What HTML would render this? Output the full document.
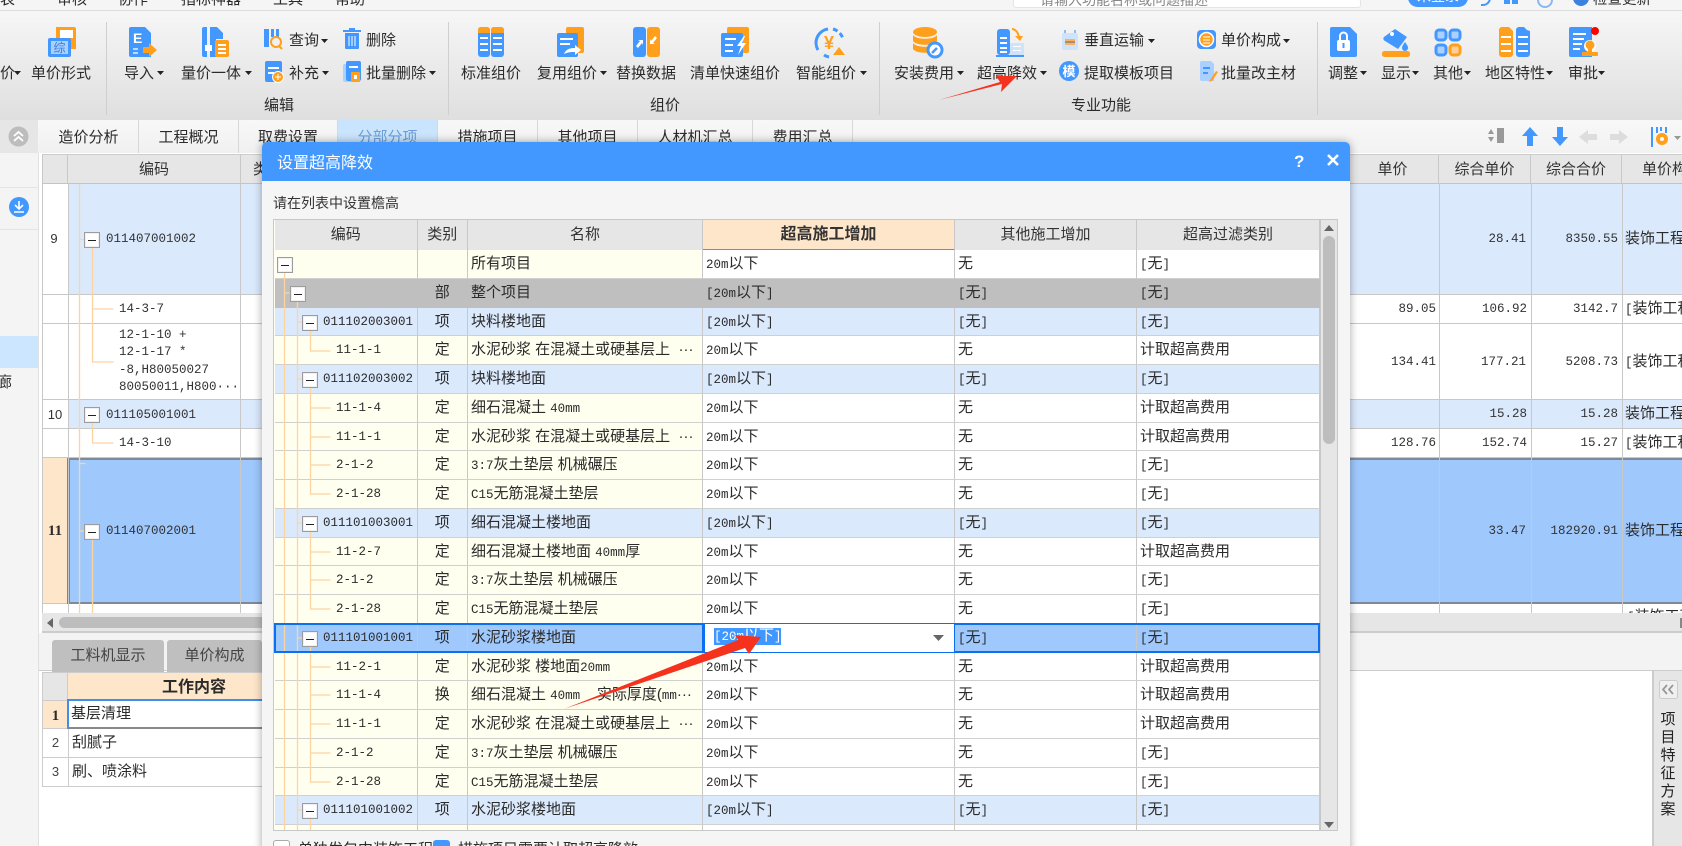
<!DOCTYPE html>
<html lang="zh"><head><meta charset="utf-8"><title>设置超高降效</title>
<style>
html,body{margin:0;padding:0;width:1682px;height:846px;overflow:hidden;background:#fff}
#root{position:absolute;left:0;top:0;width:1682px;height:846px;overflow:hidden;font-family:"Liberation Sans","Noto Sans CJK SC",sans-serif;color:#2b2b2b;font-size:15px;filter:blur(.35px)}
.a{position:absolute}
.t{position:absolute;line-height:20px;white-space:nowrap}
.ct{transform:translateX(-50%)}
.n{font-family:"Liberation Mono","Noto Sans CJK SC",monospace;font-size:12.5px;color:#333}
.nr{position:absolute;line-height:20px;white-space:nowrap;text-align:right;font-family:"Liberation Mono",monospace;font-size:12.5px;color:#333}
i{font-style:normal;font-family:"Liberation Mono",monospace;font-size:12.5px}
.tab{position:absolute;top:120px;height:33px;line-height:36px;text-align:center;border-right:1px solid #d8d8d8;background:linear-gradient(#f8f8f8,#f0f0f0);box-sizing:border-box}
.hd{position:absolute;top:154px;height:30px;line-height:30px;text-align:center;background:#e6e6e6;border-right:1px solid #c8c8c8;border-top:1px solid #ccc;border-bottom:1px solid #c4c4c4;box-sizing:border-box;color:#333;white-space:nowrap;overflow:hidden}
.rw{position:absolute;box-sizing:border-box;border-bottom:1px solid #c8c8c8}
.vl{position:absolute;width:1px;background:#c8c8c8}
.box{position:absolute;width:16px;height:16px;box-sizing:border-box;border:1px solid #9c9c9c;background:#fff;box-shadow:inset 0 0 0 1px #f0f0f0}
.box:after{content:"";position:absolute;left:3px;right:3px;top:6.500px;height:1px;background:#222}
#dlg{position:absolute;left:262px;top:142px;width:1088px;height:720px;background:#f5f5f5;border-radius:5px 5px 0 0;box-shadow:0 0 9px rgba(0,0,0,.35)}
#title{position:absolute;left:0;top:0;width:1088px;height:39px;background:#4398ff;border-radius:5px 5px 0 0;color:#fff;font-size:16px;line-height:44px;text-indent:15px}
#grid{position:absolute;left:273px;top:219px;width:1065px;height:612px;background:#fffff2;border:1px solid #c8c8c8;box-sizing:border-box;overflow:hidden}
.r{position:absolute;left:1px;width:1045px;height:28.75px;display:grid;grid-template-columns:142.5px 50.5px 235px 252px 182px 183px;line-height:28px;white-space:nowrap;box-sizing:border-box}
.r>div{border-right:1px solid #c8c8c8;border-bottom:1px solid #d0d0d0;padding-left:3px;overflow:hidden;background:#fff;color:#2b2b2b;box-sizing:border-box}
.r>div:nth-child(1),.r>div:nth-child(2),.r>div:nth-child(3){background:#fffff0}
.r>div:nth-child(2){text-align:center;padding:0}
.r>div:nth-child(1).i{padding-left:48px}
.r>div:nth-child(1).c{padding-left:61px}
.b>div,.b>div:nth-child(1),.b>div:nth-child(2),.b>div:nth-child(3){background:#dbe9fd}
.g>div,.g>div:nth-child(1),.g>div:nth-child(2),.g>div:nth-child(3){background:#bfbfbf;border-color:#bfbfbf}
.s>div,.s>div:nth-child(1),.s>div:nth-child(2),.s>div:nth-child(3){background:#9fc8fd}
.h{height:31px;line-height:30px;top:0}
.h>div,.h>div:nth-child(1),.h>div:nth-child(2),.h>div:nth-child(3){background:#e6e6e6;text-align:center;padding:0;color:#333;border-bottom:1px solid #c8c8c8}
.h>div.p{background:#fee6cb;border-bottom:2px solid #4398ff;font-weight:bold;font-size:16px}
</style></head><body><div id="root">

<!-- top menu -->
<div class="a" style="left:0;top:0;width:1682px;height:11px;background:#f5f5f5;border-bottom:1px solid #dcdcdc;box-sizing:border-box"></div>
<div class="t" style="left:0;top:-10px">表</div><div class="t" style="left:57px;top:-10px">审核</div><div class="t" style="left:118px;top:-10px">协作</div><div class="t" style="left:181px;top:-10px">指标神器</div><div class="t" style="left:273px;top:-10px">工具</div><div class="t" style="left:335px;top:-10px">帮助</div>
<div class="a" style="left:1013px;top:-8px;width:346px;height:14px;background:#fff;border-radius:3px;border:1px solid #e4e4e4"></div>
<div class="t" style="left:1040px;top:-10px;color:#888;font-size:14px">请输入功能名称或问题描述</div>
<div class="a" style="left:1408px;top:-12px;width:60px;height:19px;background:#4398ff;border-radius:10px;color:#fff;text-align:center;line-height:17px;font-size:14px">未登录</div>
<div class="a" style="left:1481px;top:-6px;width:8px;height:10px;border:2px solid #4398ff;border-top:0;border-left:0;border-radius:0 0 8px 0"></div>
<div class="a" style="left:1504px;top:-4px;width:6px;height:8px;background:#4398ff"></div><div class="a" style="left:1512px;top:-4px;width:6px;height:8px;background:#4398ff"></div>
<div class="a" style="left:1537px;top:-8px;width:12px;height:12px;border:2px solid #8ab8ee;border-radius:50%"></div>
<div class="a" style="left:1573px;top:-10px;width:16px;height:16px;background:#3b82e0;border-radius:50%"></div>
<div class="t" style="left:1593px;top:-10px;font-size:14.5px">检查更新</div>

<!-- ribbon -->
<div class="a" style="left:0;top:11px;width:1682px;height:109px;background:linear-gradient(#f6f6f6,#dfdfdf)"></div>
<div class="a" style="left:106px;top:22px;width:1px;height:93px;background:#cfcfcf"></div>
<div class="a" style="left:448px;top:22px;width:1px;height:93px;background:#cfcfcf"></div>
<div class="a" style="left:879px;top:22px;width:1px;height:93px;background:#cfcfcf"></div>
<div class="a" style="left:1317px;top:22px;width:1px;height:93px;background:#cfcfcf"></div>

<svg class="a" style="left:0;top:0" width="1682" height="120" viewBox="0 0 1682 120">
<g fill="#222">
<path d="M14 71h7l-3.500 4zM157 71h7l-3.500 4zM245 71h7l-3.500 4zM321 39h7l-3.500 4zM322 71h7l-3.500 4zM429 71h7l-3.500 4zM600 71h7l-3.500 4zM860 71h7l-3.500 4zM957 71h7l-3.500 4zM1040 71h7l-3.500 4zM1148 39h7l-3.500 4zM1283 39h7l-3.500 4zM1360 71h7l-3.500 4zM1412 71h7l-3.500 4zM1464 71h7l-3.500 4zM1546 71h7l-3.500 4zM1598 71h7l-3.500 4z"/>
</g>
<!-- 单价形式 -->
<path d="M56 27h18a2 2 0 0 1 2 2v20h-6V40H56z" fill="#ff9f1c"/><path d="M60 30h13v8H60z" fill="#fff"/>
<rect x="48" y="38" width="23" height="19" rx="2" fill="#4398ff"/><rect x="51" y="41" width="17" height="13" fill="#a9d0ff"/>
<text x="59.500" y="52" font-size="12" fill="#2f7fe0" text-anchor="middle" font-family="Noto Sans CJK SC">综</text>
<!-- 导入 -->
<path d="M129 29a2 2 0 0 1 2-2h14l6 6v24h-20a2 2 0 0 1-2-2z" fill="#4398ff"/><text x="133" y="43" font-size="14" font-weight="bold" fill="#fff" font-family="Liberation Sans">E</text>
<path d="M133 48h5v2h-5zM133 52h5v2h-5z" fill="#bcd9ff"/><path d="M143 47h6v-4l8 7-8 7v-4h-6z" fill="#ff9f1c"/>
<!-- 量价一体 -->
<path d="M202 29a2 2 0 0 1 2-2h3v30h-3a2 2 0 0 1-2-2zM210 27h7l6 6v6h-7v18h-6z" fill="#4398ff"/><rect x="205" y="45" width="7" height="6" fill="#fff"/>
<rect x="215" y="40" width="14" height="17" rx="2" fill="#ff9f1c"/><path d="M218 44h8v2h-8zM218 48h8v2h-8zM218 52h8v2h-8z" fill="#fff"/>
<!-- 查询 -->
<path d="M264 29h5v18h-5z" fill="#4398ff"/><path d="M271 29h3v8h-3zM276 29h3v8h-3z" fill="#4398ff"/><circle cx="276" cy="42" r="5" fill="none" stroke="#ff9f1c" stroke-width="2"/><path d="M279 46l3 3" stroke="#ff9f1c" stroke-width="2"/>
<!-- 补充 -->
<rect x="265" y="61" width="17" height="21" rx="2" fill="#4398ff"/><path d="M268 67h11v2h-11zM268 72h6v2h-6z" fill="#fff"/><circle cx="278" cy="77" r="5.500" fill="#ff9f1c" stroke="#fff"/><path d="M275 77h6M278 74v6" stroke="#fff"/>
<!-- 删除 -->
<path d="M343 30h18v2h-18zM349 28h6v2h-6zM345 33h14v15a1 1 0 0 1-1 1h-12a1 1 0 0 1-1-1z" fill="#4398ff"/><path d="M349 36v10M352 36v10M355 36v10" stroke="#fff"/>
<!-- 批量删除 -->
<rect x="343" y="64" width="15" height="18" rx="2" fill="#a9d0ff"/><rect x="346" y="61" width="15" height="20" rx="2" fill="#4398ff"/><path d="M349 66h9v2h-9z" fill="#fff"/><rect x="351" y="72" width="9" height="10" rx="1" fill="#ff9f1c"/><rect x="354" y="75" width="3" height="4" fill="#fff"/>
<!-- 标准组价 -->
<g id="col"><rect x="478" y="27" width="12" height="30" rx="3" fill="#4398ff"/><rect x="491" y="27" width="13" height="30" rx="3" fill="#4398ff"/><path d="M478 30a3 3 0 0 1 3-3h6a3 3 0 0 1 3 3v3h-12zM491 30a3 3 0 0 1 3-3h7a3 3 0 0 1 3 3v3h-13z" fill="#ff9f1c"/><path d="M480 37h8v2h-8zM480 43h8v2h-8zM480 49h8v2h-8zM493 37h9v2h-9zM493 43h9v2h-9zM493 49h9v2h-9z" fill="#fff"/></g>
<!-- 复用组价 -->
<rect x="566" y="27" width="18" height="26" rx="2" fill="#ff9f1c"/><rect x="557" y="33" width="21" height="24" rx="2" fill="#4398ff"/><path d="M560 38h13v2h-13zM560 43h10v2h-10z" fill="#fff"/><path d="M564 54c2-5 6-6 11-6v-3l6 5-6 5v-3c-4 0-7 0-11 2z" fill="#fff"/>
<!-- 替换数据 -->
<rect x="633" y="27" width="13" height="30" rx="3" fill="#4398ff"/><rect x="647" y="27" width="13" height="30" rx="3" fill="#ff9f1c"/><path d="M636 46l4-5-2-1h5v5l-1-2-4 5zM657 38l-4 5 2 1h-5v-5l1 2 4-5z" fill="#fff"/>
<!-- 清单快速组价 -->
<rect x="727" y="27" width="22" height="26" rx="2" fill="#ff9f1c"/><rect x="721" y="33" width="22" height="24" rx="2" fill="#4398ff"/><path d="M725 38h11v2h-11zM725 44h8v2h-8zM725 50h8v2h-8z" fill="#fff"/><path d="M744 36l-7 10h4l-3 9 8-12h-4l3-7z" fill="#fff"/>
<!-- 智能组价 -->
<path d="M818 50a14 14 0 0 1 10-21" fill="none" stroke="#4398ff" stroke-width="3"/><path d="M833 29a14 14 0 0 1 10 10" fill="none" stroke="#4398ff" stroke-width="3" stroke-dasharray="5 3"/><path d="M824 55a14 14 0 0 0 5 2" fill="none" stroke="#4398ff" stroke-width="3"/>
<text x="829" y="49" font-size="18" font-weight="bold" fill="#ff9f1c" text-anchor="middle" font-family="Liberation Sans">¥</text><path d="M838 44l6 8h-12z" fill="#ff9f1c" transform="translate(1 3)"/>
<!-- 安装费用 -->
<ellipse cx="925" cy="32" rx="12" ry="5" fill="#ff9f1c"/><path d="M913 35c3 5 21 5 24 0v6c-3 5-21 5-24 0zM913 43c3 5 21 5 24 0v6c-3 5-21 5-24 0z" fill="#ff9f1c"/><circle cx="935" cy="50" r="7" fill="#fff" stroke="#4398ff" stroke-width="3"/><path d="M932 53l5-5" stroke="#4398ff" stroke-width="2.500"/>
<!-- 超高降效 -->
<rect x="997" y="29" width="13" height="26" rx="3" fill="#4398ff"/><rect x="1010" y="43" width="14" height="12" fill="#cfe3fb"/><rect x="996" y="55" width="28" height="2" fill="#4398ff"/><path d="M1000 37h7v2h-7zM1000 42h7v2h-7zM1000 47h7v2h-7zM1000 51h7v2h-7zM1013 46h8v1h-8zM1013 50h8v1h-8z" fill="#fff"/><path d="M1012 29c3 0 6 3 7 8" fill="none" stroke="#ff9f1c" stroke-width="2"/><path d="M1015 36l8 0-3 5z" fill="#ff9f1c"/>
<!-- 垂直运输 -->
<rect x="1062" y="33" width="16" height="17" rx="2" fill="#cfe3fb"/><rect x="1065" y="39" width="10" height="6" fill="#f6b46a"/><path d="M1065 30v3M1075 30v3" stroke="#8fbdf3" stroke-width="2"/><path d="M1065 42h10" stroke="#666" stroke-width="1"/>
<!-- 模 -->
<circle cx="1069" cy="71" r="10" fill="#4398ff"/><text x="1069" y="76" font-size="13" fill="#fff" font-weight="bold" text-anchor="middle" font-family="Noto Sans CJK SC">模</text>
<!-- 单价构成 -->
<rect x="1197" y="30" width="19" height="19" rx="4" fill="#4398ff"/><circle cx="1206.500" cy="39.500" r="7" fill="#ff9f1c" stroke="#fff" stroke-width="1.500"/><path d="M1203 37h7M1203 40h7M1203 43h7" stroke="#fff"/>
<!-- 批量改主材 -->
<path d="M1200 63a2 2 0 0 1 2-2h9l3 3v17h-12a2 2 0 0 1-2-2z" fill="#a9d0ff"/><path d="M1203 67h7v2h-7zM1203 72h5v2h-5z" fill="#4398ff"/><path d="M1210 80l6-9 2 1-6 9-3 1z" fill="#ff9f1c"/>
<!-- 调整 -->
<path d="M1330 29a2 2 0 0 1 2-2h18l7 7v21a2 2 0 0 1-2 2h-23a2 2 0 0 1-2-2z" fill="#4398ff"/><rect x="1337" y="40" width="13" height="11" rx="2" fill="#fff"/><path d="M1340 40v-4a3.500 3.500 0 0 1 7 0v4" fill="none" stroke="#fff" stroke-width="2"/><rect x="1342.500" y="43" width="2" height="5" fill="#4398ff"/>
<!-- 显示 -->
<path d="M1395 29l12 8-9 12-13-8c-2-1-2-3-1-4z" fill="#4398ff"/><circle cx="1392" cy="34" r="2" fill="#fff"/><path d="M1405 42c2 3 3 4 3 6a3 3 0 0 1-6 0c0-2 1-3 3-6z" fill="#4398ff"/><rect x="1382" y="51" width="28" height="6" rx="2.500" fill="#ff9f1c"/>
<!-- 其他 -->
<g fill="#a9d0ff" stroke="#4398ff" stroke-width="3"><rect x="1436" y="30" width="10" height="10" rx="3"/><rect x="1450" y="30" width="10" height="10" rx="3"/><rect x="1436" y="45" width="10" height="10" rx="3"/></g><rect x="1450" y="45" width="10" height="10" rx="3" fill="#ffcf94" stroke="#ff9f1c" stroke-width="3"/>
<!-- 地区特性 -->
<path d="M1499 30a3 3 0 0 1 3-3h7l4 4v23a3 3 0 0 1-3 3h-8a3 3 0 0 1-3-3z" fill="#ff9f1c"/><path d="M1516 30a3 3 0 0 1 3-3h5l3 3 3 1v23a3 3 0 0 1-3 3h-8a3 3 0 0 1-3-3z" fill="#4398ff"/><path d="M1501 36h10v2h-10zM1501 43h10v2h-10zM1501 50h10v2h-10zM1518 36h10v2h-10zM1518 43h10v2h-10zM1518 50h10v2h-10z" fill="#fff"/>
<!-- 审批 -->
<path d="M1569 29a2 2 0 0 1 2-2h21v30h-21a2 2 0 0 1-2-2z" fill="#4398ff"/><path d="M1573 33h13v2h-13zM1573 38h11v2h-11zM1573 43h9v2h-9zM1573 48h7v2h-7z" fill="#fff"/><circle cx="1590" cy="46" r="6" fill="#fff"/><circle cx="1590" cy="45" r="4.500" fill="#ff9f1c"/><path d="M1588 49h4v4h-4z" fill="#ff9f1c"/><rect x="1582" y="52" width="16" height="4" rx="1" fill="#ff9f1c"/><circle cx="1595" cy="31" r="4" fill="#f00"/>
</svg>

<div class="t" style="left:0;top:64px">价</div>
<div class="t" style="left:31px;top:64px">单价形式</div>
<div class="t" style="left:124px;top:64px">导入</div>
<div class="t" style="left:181px;top:64px">量价一体</div>
<div class="t" style="left:289px;top:31px">查询</div>
<div class="t" style="left:289px;top:64px">补充</div>
<div class="t" style="left:366px;top:31px">删除</div>
<div class="t" style="left:366px;top:64px">批量删除</div>
<div class="t" style="left:264px;top:96px">编辑</div>
<div class="t" style="left:461px;top:64px">标准组价</div>
<div class="t" style="left:537px;top:64px">复用组价</div>
<div class="t" style="left:616px;top:64px">替换数据</div>
<div class="t" style="left:690px;top:64px">清单快速组价</div>
<div class="t" style="left:796px;top:64px">智能组价</div>
<div class="t" style="left:650px;top:96px">组价</div>
<div class="t" style="left:894px;top:64px">安装费用</div>
<div class="t" style="left:977px;top:64px">超高降效</div>
<div class="t" style="left:1084px;top:31px">垂直运输</div>
<div class="t" style="left:1084px;top:64px">提取模板项目</div>
<div class="t" style="left:1071px;top:96px">专业功能</div>
<div class="t" style="left:1221px;top:31px">单价构成</div>
<div class="t" style="left:1221px;top:64px">批量改主材</div>
<div class="t" style="left:1328px;top:64px">调整</div>
<div class="t" style="left:1381px;top:64px">显示</div>
<div class="t" style="left:1433px;top:64px">其他</div>
<div class="t" style="left:1485px;top:64px">地区特性</div>
<div class="t" style="left:1568px;top:64px">审批</div>

<!-- tabs row -->
<div class="a" style="left:0;top:120px;width:1682px;height:33px;background:linear-gradient(#f8f8f8,#f2f2f2)"></div>
<div class="a" style="left:0;top:120px;width:38px;height:33px;background:#e6e6e6"></div>
<svg class="a" style="left:8px;top:126px" width="21" height="21"><circle cx="10.500" cy="10.500" r="10" fill="#bdbdbd"/><path d="M6 10l4.500-4 4.500 4M6 15l4.500-4 4.500 4" fill="none" stroke="#fff" stroke-width="1.800"/></svg>
<div class="tab" style="left:39px;width:100px">造价分析</div>
<div class="tab" style="left:139px;width:100px">工程概况</div>
<div class="tab" style="left:239px;width:99px">取费设置</div>
<div class="tab" style="left:338px;width:100px;background:linear-gradient(#c8e4ff,#cfe6fb);color:#6a9ed8">分部分项</div>
<div class="tab" style="left:438px;width:100px">措施项目</div>
<div class="tab" style="left:538px;width:100px">其他项目</div>
<div class="tab" style="left:638px;width:115px">人材机汇总</div>
<div class="tab" style="left:753px;width:100px">费用汇总</div>
<svg class="a" style="left:1480px;top:124px" width="202" height="28">
<path d="M14 10H8l3-5zM14 13H8l3 5z" fill="#999"/><rect x="17" y="4" width="7" height="15" fill="#999"/>
<path d="M50 3l8 9h-5v10h-6V12h-5z" fill="#4398ff"/><path d="M80 22l8-9h-5V3h-6v10h-5z" fill="#4398ff"/>
<path d="M99 13l9-7v4h9v6h-9v4z" fill="#ddd"/><path d="M148 13l-9-7v4h-9v6h9v4z" fill="#ddd"/>
<path d="M172 3v20" stroke="#4398ff" stroke-width="2"/><path d="M177 3v6M181 3v4M186 3v6" stroke="#4398ff" stroke-width="2"/><circle cx="182" cy="15" r="6" fill="#ff9f1c"/><circle cx="182" cy="15" r="2" fill="#fff"/><path d="M194 12h7l-3.500 4z" fill="#999"/>
</svg>

<!-- left panel -->
<div class="a" style="left:0;top:153px;width:38px;height:693px;background:#f4f4f4;border-right:1px solid #e0e0e0"></div>
<div class="a" style="left:0;top:187px;width:38px;height:1px;background:#e4e4e4"></div>
<div class="a" style="left:0;top:229px;width:38px;height:1px;background:#e4e4e4"></div>
<svg class="a" style="left:9px;top:197px" width="21" height="21"><circle cx="10" cy="10" r="10" fill="#4398ff"/><path d="M6 8l4 4 4-4M10 4v8M5 15h10" fill="none" stroke="#fff" stroke-width="1.600"/></svg>
<div class="a" style="left:0;top:336px;width:38px;height:32px;background:#cce6ff"></div>
<div class="t" style="left:-3px;top:373px">廊</div>

<!-- main grid -->
<div class="a" style="left:42px;top:154px;width:1640px;height:459px;background:#fff;overflow:hidden"></div>
<div class="hd" style="left:42px;width:26px"></div>
<div class="hd" style="left:68px;width:173px">编码</div>
<div class="hd" style="left:241px;width:1106px;text-align:left;text-indent:12px">类别</div>
<div class="hd" style="left:1347px;width:92px">单价</div>
<div class="hd" style="left:1439px;width:92px">综合单价</div>
<div class="hd" style="left:1531px;width:91px">综合合价</div>
<div class="hd" style="left:1622px;width:60px;text-align:left;text-indent:20px;border-right:0">单价构成</div>

<div class="rw" style="left:68px;top:184px;width:1614px;height:111px;background:#dbe9fd"></div>
<div class="rw" style="left:42px;top:184px;width:26px;height:111px;background:#fff"></div>
<div class="rw" style="left:42px;top:295px;width:1640px;height:29px"></div>
<div class="rw" style="left:42px;top:324px;width:1640px;height:76px"></div>
<div class="rw" style="left:68px;top:400px;width:1614px;height:29px;background:#dbe9fd"></div>
<div class="rw" style="left:42px;top:400px;width:26px;height:29px;background:#fff"></div>
<div class="rw" style="left:42px;top:429px;width:1640px;height:29px"></div>
<div class="a" style="left:42px;top:458px;width:26px;height:146px;background:#fee6cb;box-sizing:border-box;border-bottom:1px solid #c8c8c8"></div>
<div class="a" style="left:67px;top:458px;width:1615px;height:146px;background:#9fc8fd;box-sizing:border-box;border:2px solid #808a96;border-left:3px solid #3f8ef0;border-right:0"></div>

<div class="vl" style="left:42px;top:154px;height:459px"></div>
<div class="vl" style="left:68px;top:184px;height:429px"></div>
<div class="vl" style="left:240px;top:184px;height:429px"></div>
<div class="vl" style="left:1439px;top:184px;height:429px"></div>
<div class="vl" style="left:1531px;top:184px;height:429px"></div>
<div class="vl" style="left:1622px;top:184px;height:429px"></div>

<svg class="a" style="left:60px;top:184px" width="70" height="430"><g fill="none" stroke="#fdd4a0" stroke-width="1.300"><path d="M19.500 0v429"/><path d="M19.500 55.500h6M19.500 279.500h6M19.500 347h6"/><path d="M32.500 62v116h21M32.500 125h21"/><path d="M32.500 238v21h21"/><path d="M32.500 355v74"/></g></svg>
<div class="box" style="left:84px;top:232px"></div>
<div class="box" style="left:84px;top:407px"></div>
<div class="box" style="left:84px;top:524px"></div>

<div class="t ct" style="left:54px;top:229px;color:#333;font-size:13px">9</div>
<div class="t ct" style="left:55px;top:405px;color:#333;font-size:13px">10</div>
<div class="t ct" style="left:55px;top:521px;font-family:'Liberation Serif';font-weight:bold;font-size:15px">11</div>
<div class="t n" style="left:106px;top:229px">011407001002</div>
<div class="t n" style="left:119px;top:299px">14-3-7</div>
<div class="t n" style="left:119px;top:325px">12-1-10 +</div>
<div class="t n" style="left:119px;top:342px">12-1-17 *</div>
<div class="t n" style="left:119px;top:360px">-8,H80050027</div>
<div class="t n" style="left:119px;top:377px">80050011,H800···</div>
<div class="t n" style="left:106px;top:405px">011105001001</div>
<div class="t n" style="left:119px;top:433px">14-3-10</div>
<div class="t n" style="left:106px;top:521px">011407002001</div>

<div class="nr" style="right:246px;top:299px">89.05</div>
<div class="nr" style="right:246px;top:352px">134.41</div>
<div class="nr" style="right:246px;top:433px">128.76</div>
<div class="nr" style="right:156px;top:229px">28.41</div>
<div class="nr" style="right:155px;top:299px">106.92</div>
<div class="nr" style="right:156px;top:352px">177.21</div>
<div class="nr" style="right:155px;top:404px">15.28</div>
<div class="nr" style="right:155px;top:433px">152.74</div>
<div class="nr" style="right:156px;top:521px">33.47</div>
<div class="nr" style="right:64px;top:229px">8350.55</div>
<div class="nr" style="right:64px;top:299px">3142.7</div>
<div class="nr" style="right:64px;top:352px">5208.73</div>
<div class="nr" style="right:64px;top:404px">15.28</div>
<div class="nr" style="right:64px;top:433px">15.27</div>
<div class="nr" style="right:64px;top:521px">182920.91</div>
<div class="t" style="left:1625px;top:229px">装饰工程</div>
<div class="t" style="left:1625px;top:299px"><i>[</i>装饰工程</div>
<div class="t" style="left:1625px;top:352px"><i>[</i>装饰工程</div>
<div class="t" style="left:1625px;top:404px">装饰工程</div>
<div class="t" style="left:1625px;top:433px"><i>[</i>装饰工程</div>
<div class="t" style="left:1625px;top:521px">装饰工程</div>
<div class="t" style="left:1627px;top:607px"><i>[</i>装饰工程</div>

<!-- horizontal scrollbar -->
<div class="a" style="left:42px;top:613px;width:1640px;height:20px;background:#e6e6e6;border-bottom:2px solid #ccc;box-sizing:border-box"></div>
<div class="a" style="left:59px;top:617px;width:1280px;height:11px;background:#bdbdbd;border-radius:6px"></div>
<svg class="a" style="left:46px;top:617px" width="10" height="12"><path d="M7 1v10L1 6z" fill="#666"/></svg>
<div class="a" style="left:1680px;top:618px;width:2px;height:10px;background:#888"></div>

<!-- lower area -->
<div class="a" style="left:39px;top:633px;width:1643px;height:38px;background:#f3f3f3;border-bottom:1px solid #ccc;box-sizing:border-box"></div>
<div class="a" style="left:52px;top:640px;width:112px;height:32px;background:#bfbfbf;border-radius:3px 3px 0 0;text-align:center;line-height:32px;color:#444">工料机显示</div>
<div class="a" style="left:167px;top:640px;width:95px;height:32px;background:#bfbfbf;border-radius:3px 3px 0 0;text-align:center;line-height:32px;color:#444">单价构成</div>
<div class="a" style="left:42px;top:672px;width:26px;height:29px;background:#e6e6e6;border:1px solid #ccc;box-sizing:border-box"></div>
<div class="a" style="left:68px;top:672px;width:200px;height:29px;background:#fee6cb;text-indent:94px;line-height:29px;font-weight:bold;font-size:16px;border-top:1px solid #ccc;box-sizing:border-box">工作内容</div>
<div class="a" style="left:42px;top:701px;width:26px;height:28px;background:#fee6cb;text-align:center;line-height:30px;font-family:'Liberation Serif';font-weight:bold;border-left:1px solid #ccc;border-bottom:1px solid #ccc;box-sizing:border-box">1</div>
<div class="a" style="left:67px;top:699px;width:200px;height:30px;background:#fff;border-top:2px solid #3f8ef0;border-left:2px solid #3f8ef0;border-bottom:2px solid #888;box-sizing:border-box;padding-left:2px;line-height:26px">基层清理</div>
<div class="a" style="left:42px;top:729px;width:225px;height:29px;border-left:1px solid #ccc;border-bottom:1px solid #ccc;box-sizing:border-box;line-height:28px"><span style="display:inline-block;width:25px;text-align:center;border-right:1px solid #ccc;font-size:13px;color:#444;margin-right:3px">2</span>刮腻子</div>
<div class="a" style="left:42px;top:758px;width:225px;height:29px;border-left:1px solid #ccc;border-bottom:1px solid #ccc;box-sizing:border-box;line-height:28px"><span style="display:inline-block;width:25px;text-align:center;border-right:1px solid #ccc;font-size:13px;color:#444;margin-right:3px">3</span>刷、喷涂料</div>

<div class="a" style="left:1652px;top:671px;width:30px;height:175px;background:#e6e6e6;border-left:2px solid #ccc;box-sizing:border-box"></div>
<svg class="a" style="left:1659px;top:680px" width="19" height="19"><rect x=".5" y=".5" width="18" height="18" rx="2" fill="#f0f0f0" stroke="#ccc"/><path d="M8 5L4 9.500 8 14M14 5l-4 4.500L14 14" fill="none" stroke="#999" stroke-width="1.800"/></svg>
<div class="a" style="left:1659px;top:711px;width:18px;font-size:15px;line-height:18px;text-align:center;color:#222">项目特征方案</div>

<!-- dialog -->
<div id="dlg"><div id="title">设置超高降效</div>
<div class="t" style="left:1032px;top:10px;color:#fff;font-size:17px;font-weight:bold;font-family:'Liberation Sans'">?</div>
<svg class="a" style="left:1065px;top:12px" width="12" height="12"><path d="M1 1l10 10M11 1L1 11" stroke="#fff" stroke-width="2.600"/></svg>
<div class="t" style="left:11px;top:51px;font-size:14px;color:#333">请在列表中设置檐高</div>
</div>

<div id="grid">
<div class="r h"><div>编码</div><div>类别</div><div>名称</div><div class="p">超高施工增加</div><div>其他施工增加</div><div>超高过滤类别</div></div>
<div class="r" style="top:30px"><div></div><div></div><div>所有项目</div><div><i>20m</i>以下</div><div>无</div><div><i>[</i>无<i>]</i></div></div>
<div class="r g" style="top:58.750px"><div></div><div>部</div><div>整个项目</div><div><i>[</i><i>20m</i>以下<i>]</i></div><div><i>[</i>无<i>]</i></div><div><i>[</i>无<i>]</i></div></div>
<div class="r b" style="top:87.500px"><div class="i n">011102003001</div><div>项</div><div>块料楼地面</div><div><i>[</i><i>20m</i>以下<i>]</i></div><div><i>[</i>无<i>]</i></div><div><i>[</i>无<i>]</i></div></div>
<div class="r" style="top:116.250px"><div class="c n">11-1-1</div><div>定</div><div>水泥砂浆 在混凝土或硬基层上 &nbsp;···</div><div><i>20m</i>以下</div><div>无</div><div>计取超高费用</div></div>
<div class="r b" style="top:145px"><div class="i n">011102003002</div><div>项</div><div>块料楼地面</div><div><i>[</i><i>20m</i>以下<i>]</i></div><div><i>[</i>无<i>]</i></div><div><i>[</i>无<i>]</i></div></div>
<div class="r" style="top:173.750px"><div class="c n">11-1-4</div><div>定</div><div>细石混凝土 <i>40mm</i></div><div><i>20m</i>以下</div><div>无</div><div>计取超高费用</div></div>
<div class="r" style="top:202.500px"><div class="c n">11-1-1</div><div>定</div><div>水泥砂浆 在混凝土或硬基层上 &nbsp;···</div><div><i>20m</i>以下</div><div>无</div><div>计取超高费用</div></div>
<div class="r" style="top:231.250px"><div class="c n">2-1-2</div><div>定</div><div><i>3:7</i>灰土垫层 机械碾压</div><div><i>20m</i>以下</div><div>无</div><div><i>[</i>无<i>]</i></div></div>
<div class="r" style="top:260px"><div class="c n">2-1-28</div><div>定</div><div><i>C15</i>无筋混凝土垫层</div><div><i>20m</i>以下</div><div>无</div><div><i>[</i>无<i>]</i></div></div>
<div class="r b" style="top:288.750px"><div class="i n">011101003001</div><div>项</div><div>细石混凝土楼地面</div><div><i>[</i><i>20m</i>以下<i>]</i></div><div><i>[</i>无<i>]</i></div><div><i>[</i>无<i>]</i></div></div>
<div class="r" style="top:317.500px"><div class="c n">11-2-7</div><div>定</div><div>细石混凝土楼地面 <i>40mm</i>厚</div><div><i>20m</i>以下</div><div>无</div><div>计取超高费用</div></div>
<div class="r" style="top:346.250px"><div class="c n">2-1-2</div><div>定</div><div><i>3:7</i>灰土垫层 机械碾压</div><div><i>20m</i>以下</div><div>无</div><div><i>[</i>无<i>]</i></div></div>
<div class="r" style="top:375px"><div class="c n">2-1-28</div><div>定</div><div><i>C15</i>无筋混凝土垫层</div><div><i>20m</i>以下</div><div>无</div><div><i>[</i>无<i>]</i></div></div>
<div class="r s" style="top:403.750px"><div class="i n">011101001001</div><div>项</div><div>水泥砂浆楼地面</div><div></div><div><i>[</i>无<i>]</i></div><div><i>[</i>无<i>]</i></div></div>
<div class="r" style="top:432.500px"><div class="c n">11-2-1</div><div>定</div><div>水泥砂浆 楼地面<i>20mm</i></div><div><i>20m</i>以下</div><div>无</div><div>计取超高费用</div></div>
<div class="r" style="top:461.250px"><div class="c n">11-1-4</div><div>换</div><div>细石混凝土 <i>40mm</i>&nbsp;&nbsp;&nbsp; 实际厚度(<i>mm</i>···</div><div><i>20m</i>以下</div><div>无</div><div>计取超高费用</div></div>
<div class="r" style="top:490px"><div class="c n">11-1-1</div><div>定</div><div>水泥砂浆 在混凝土或硬基层上 &nbsp;···</div><div><i>20m</i>以下</div><div>无</div><div>计取超高费用</div></div>
<div class="r" style="top:518.750px"><div class="c n">2-1-2</div><div>定</div><div><i>3:7</i>灰土垫层 机械碾压</div><div><i>20m</i>以下</div><div>无</div><div><i>[</i>无<i>]</i></div></div>
<div class="r" style="top:547.500px"><div class="c n">2-1-28</div><div>定</div><div><i>C15</i>无筋混凝土垫层</div><div><i>20m</i>以下</div><div>无</div><div><i>[</i>无<i>]</i></div></div>
<div class="r b" style="top:576.250px"><div class="i n">011101001002</div><div>项</div><div>水泥砂浆楼地面</div><div><i>[</i><i>20m</i>以下<i>]</i></div><div><i>[</i>无<i>]</i></div><div><i>[</i>无<i>]</i></div></div>
<div class="r" style="top:605px"><div></div><div></div><div></div><div></div><div></div><div></div></div>
</div>

<!-- tree lines of dialog -->
<svg class="a" style="left:273px;top:219px" width="100" height="611"><g fill="none" stroke="#fdd4a0" stroke-width="1.300">
<path d="M11.500 53v558M24.500 82v529M11.500 74h5M24.500 103h5M24.500 160h5M24.500 304h5M24.500 419h5M24.500 591h5"/>
<path d="M37.500 110v22h20"/>
<path d="M37.500 168v107h20M37.500 189h20M37.500 218h20M37.500 246h20"/>
<path d="M37.500 312v78h20M37.500 333h20M37.500 361h20"/>
<path d="M37.500 427v136h20M37.500 448h20M37.500 476h20M37.500 505h20M37.500 534h20"/>
<path d="M37.500 599v12"/>
</g></svg>
<div class="box" style="left:277px;top:257px"></div>
<div class="box" style="left:290px;top:286px"></div>
<div class="box" style="left:302px;top:315px"></div>
<div class="box" style="left:302px;top:372px"></div>
<div class="box" style="left:302px;top:516px"></div>
<div class="box" style="left:302px;top:631px"></div>
<div class="box" style="left:302px;top:803px"></div>

<!-- selected row frame -->
<div class="a" style="left:274px;top:623px;width:430px;height:30px;border:2px solid #0b6ff0;box-sizing:border-box"></div>
<div class="a" style="left:704px;top:623px;width:616px;height:30px;border:2px solid #0b6ff0;border-left:0;box-sizing:border-box"></div>
<div class="a" style="left:704px;top:623px;width:251px;height:30px;border:1px solid #0b6ff0;background:#fff;box-sizing:border-box"></div>
<div class="a" style="left:714px;top:628px;width:67px;height:17px;background:#3f97ff;color:#fff;line-height:16px;white-space:nowrap"><i>[</i><i>20m</i>以下<i>]</i></div>
<svg class="a" style="left:933px;top:634px" width="12" height="8"><path d="M0 1h11L5.500 7z" fill="#666"/></svg>

<!-- dialog scrollbar -->
<div class="a" style="left:1320px;top:220px;width:17px;height:610px;background:#e6e6e6;border-left:1px solid #c8c8c8;box-sizing:border-box"></div>
<svg class="a" style="left:1323px;top:224px" width="12" height="8"><path d="M6 1l5 6H1z" fill="#666"/></svg>
<div class="a" style="left:1323px;top:236px;width:12px;height:208px;background:#bdbdbd;border-radius:6px"></div>
<svg class="a" style="left:1323px;top:821px" width="12" height="8"><path d="M1 1h10L6 7z" fill="#666"/></svg>

<!-- dialog bottom checks -->
<div class="a" style="left:273px;top:840px;width:17px;height:17px;border:1px solid #aaa;border-radius:3px;background:#fff;box-sizing:border-box"></div>
<div class="t" style="left:298px;top:840px">单独发包中装饰工程</div>
<div class="a" style="left:433px;top:840px;width:17px;height:17px;background:#4398ff;border-radius:3px"></div>
<div class="t" style="left:458px;top:840px">措施项目需要计取超高降效</div>

<!-- red arrows -->
<svg class="a" style="left:0;top:0" width="1682" height="846">
<path d="M939 100L1000 82 996 76 1017 76 1001 92 1002 84z" fill="#f5321e"/>
<path d="M564 709L738 640 735 635 761 637 749 654 745 648z" fill="#f5321e"/>
</svg>
</div></body></html>
